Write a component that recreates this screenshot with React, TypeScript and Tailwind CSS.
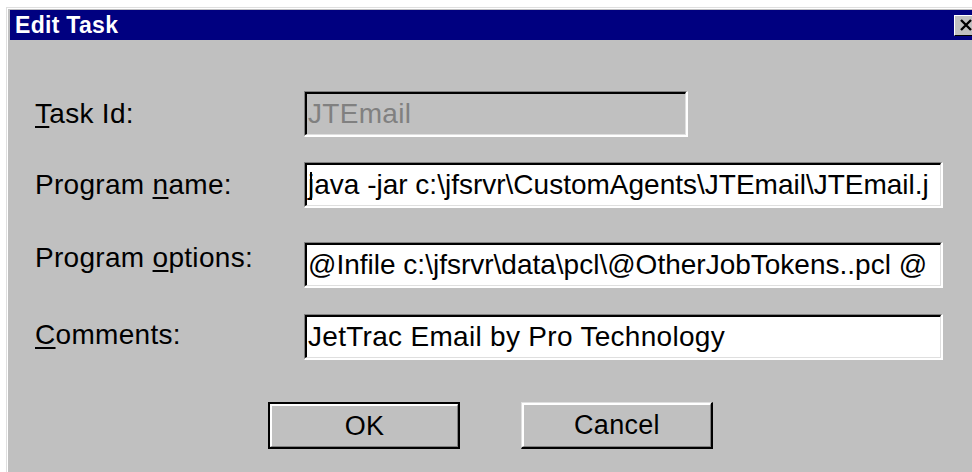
import { ReactNode } from "react";

// Sunken Win95-style edit box
function EditBox({
  value,
  width,
  disabled,
  caret,
  tight,
}: {
  value: string;
  width: string;
  disabled?: boolean;
  caret?: boolean;
  tight?: boolean;
}) {
  return (
    <div
      className={`${width} h-[46px] border-t border-l border-[#808080] border-r-2 border-b-2 border-r-white border-b-white`}
    >
      <div
        className={`relative h-full border-t-2 border-l-2 border-black border-r border-b border-r-[#dfdfdf] border-b-[#dfdfdf] overflow-hidden ${
          disabled ? "bg-[#c0c0c0]" : "bg-white"
        }`}
      >
        <div
          className={`pl-[1px] pt-[3px] whitespace-nowrap text-[28px] leading-[34px] ${
            tight ? "tracking-normal" : "tracking-[0.3px]"
          } ${disabled ? "text-[#808080]" : "text-black"}`}
        >
          {value}
        </div>
        {caret && <span className="absolute left-[3px] top-[7px] w-[2px] h-[28px] bg-black" />}
      </div>
    </div>
  );
}

function Field({
  label,
  children,
  className,
}: {
  label: ReactNode;
  children: ReactNode;
  className?: string;
}) {
  return (
    <div className={`flex items-center ${className ?? ""}`}>
      <div className="w-[294px] pl-[25px] text-[28px] tracking-[0.3px] text-black">{label}</div>
      {children}
    </div>
  );
}

function Btn({ text, isDefault }: { text: string; isDefault?: boolean }) {
  return (
    <div
      className={`w-[192px] h-[47px] ${
        isDefault ? "border-2 border-black" : "border-r-2 border-b-2 border-black border-t border-l border-t-[#dfdfdf] border-l-[#dfdfdf]"
      }`}
    >
      <div className="h-full flex items-center justify-center text-[27px] tracking-[0.3px] text-black border-t-2 border-l-2 border-white border-r border-b border-r-[#808080] border-b-[#808080]">
        {text}
      </div>
    </div>
  );
}

export default function App() {
  return (
    <div className="w-[972px] h-[472px] bg-white overflow-hidden pl-[6px] pt-[7px] font-['Liberation_Sans',Arial,sans-serif]">
      <div className="w-[980px] h-[480px] bg-[#c0c0c0] border-t border-l border-[#dfdfdf]">
        <div className="h-full border-t border-l border-white pl-[2px] pt-[1px]">
          {/* title bar */}
          <div className="h-[30px] bg-[#000080] flex items-center justify-between pl-[5px] pr-[8px]">
            <span className="text-white font-bold text-[23px] tracking-[0.3px] leading-none">Edit Task</span>
            <div className="w-[24px] h-[21px] bg-[#c0c0c0] border-t border-l border-white border-r border-b border-r-black border-b-black flex items-center justify-center">
              <svg width="14" height="12" viewBox="0 0 14 12">
                <path d="M2 1 L12 11 M12 1 L2 11" stroke="black" strokeWidth="2.4" />
              </svg>
            </div>
          </div>

          <Field
            className="mt-[51px]"
            label={
              <>
                <u className="underline-offset-[3px]">T</u>ask Id:
              </>
            }
          >
            <EditBox value="JTEmail" width="w-[384px]" disabled />
          </Field>

          <Field
            className="mt-[25px]"
            label={
              <>
                Program <u className="underline-offset-[3px]">n</u>ame:
              </>
            }
          >
            <EditBox value="java -jar c:\jfsrvr\CustomAgents\JTEmail\JTEmail.j" width="w-[639px]" caret tight />
          </Field>

          <Field
            className="mt-[34px]"
            label={
              <div className="-mt-[14px]">
                Program <u className="underline-offset-[3px]">o</u>ptions:
              </div>
            }
          >
            <EditBox value="@Infile c:\jfsrvr\data\pcl\@OtherJobTokens..pcl @" width="w-[639px]" tight />
          </Field>

          <Field
            className="mt-[26px]"
            label={
              <div className="-mt-[4px]">
                <u className="underline-offset-[3px]">C</u>omments:
              </div>
            }
          >
            <EditBox value="JetTrac Email by Pro Technology" width="w-[639px]" />
          </Field>

          <div className="flex gap-[61px] pl-[258px] mt-[42px]">
            <Btn text="OK" isDefault />
            <Btn text="Cancel" />
          </div>
        </div>
      </div>
    </div>
  );
}
